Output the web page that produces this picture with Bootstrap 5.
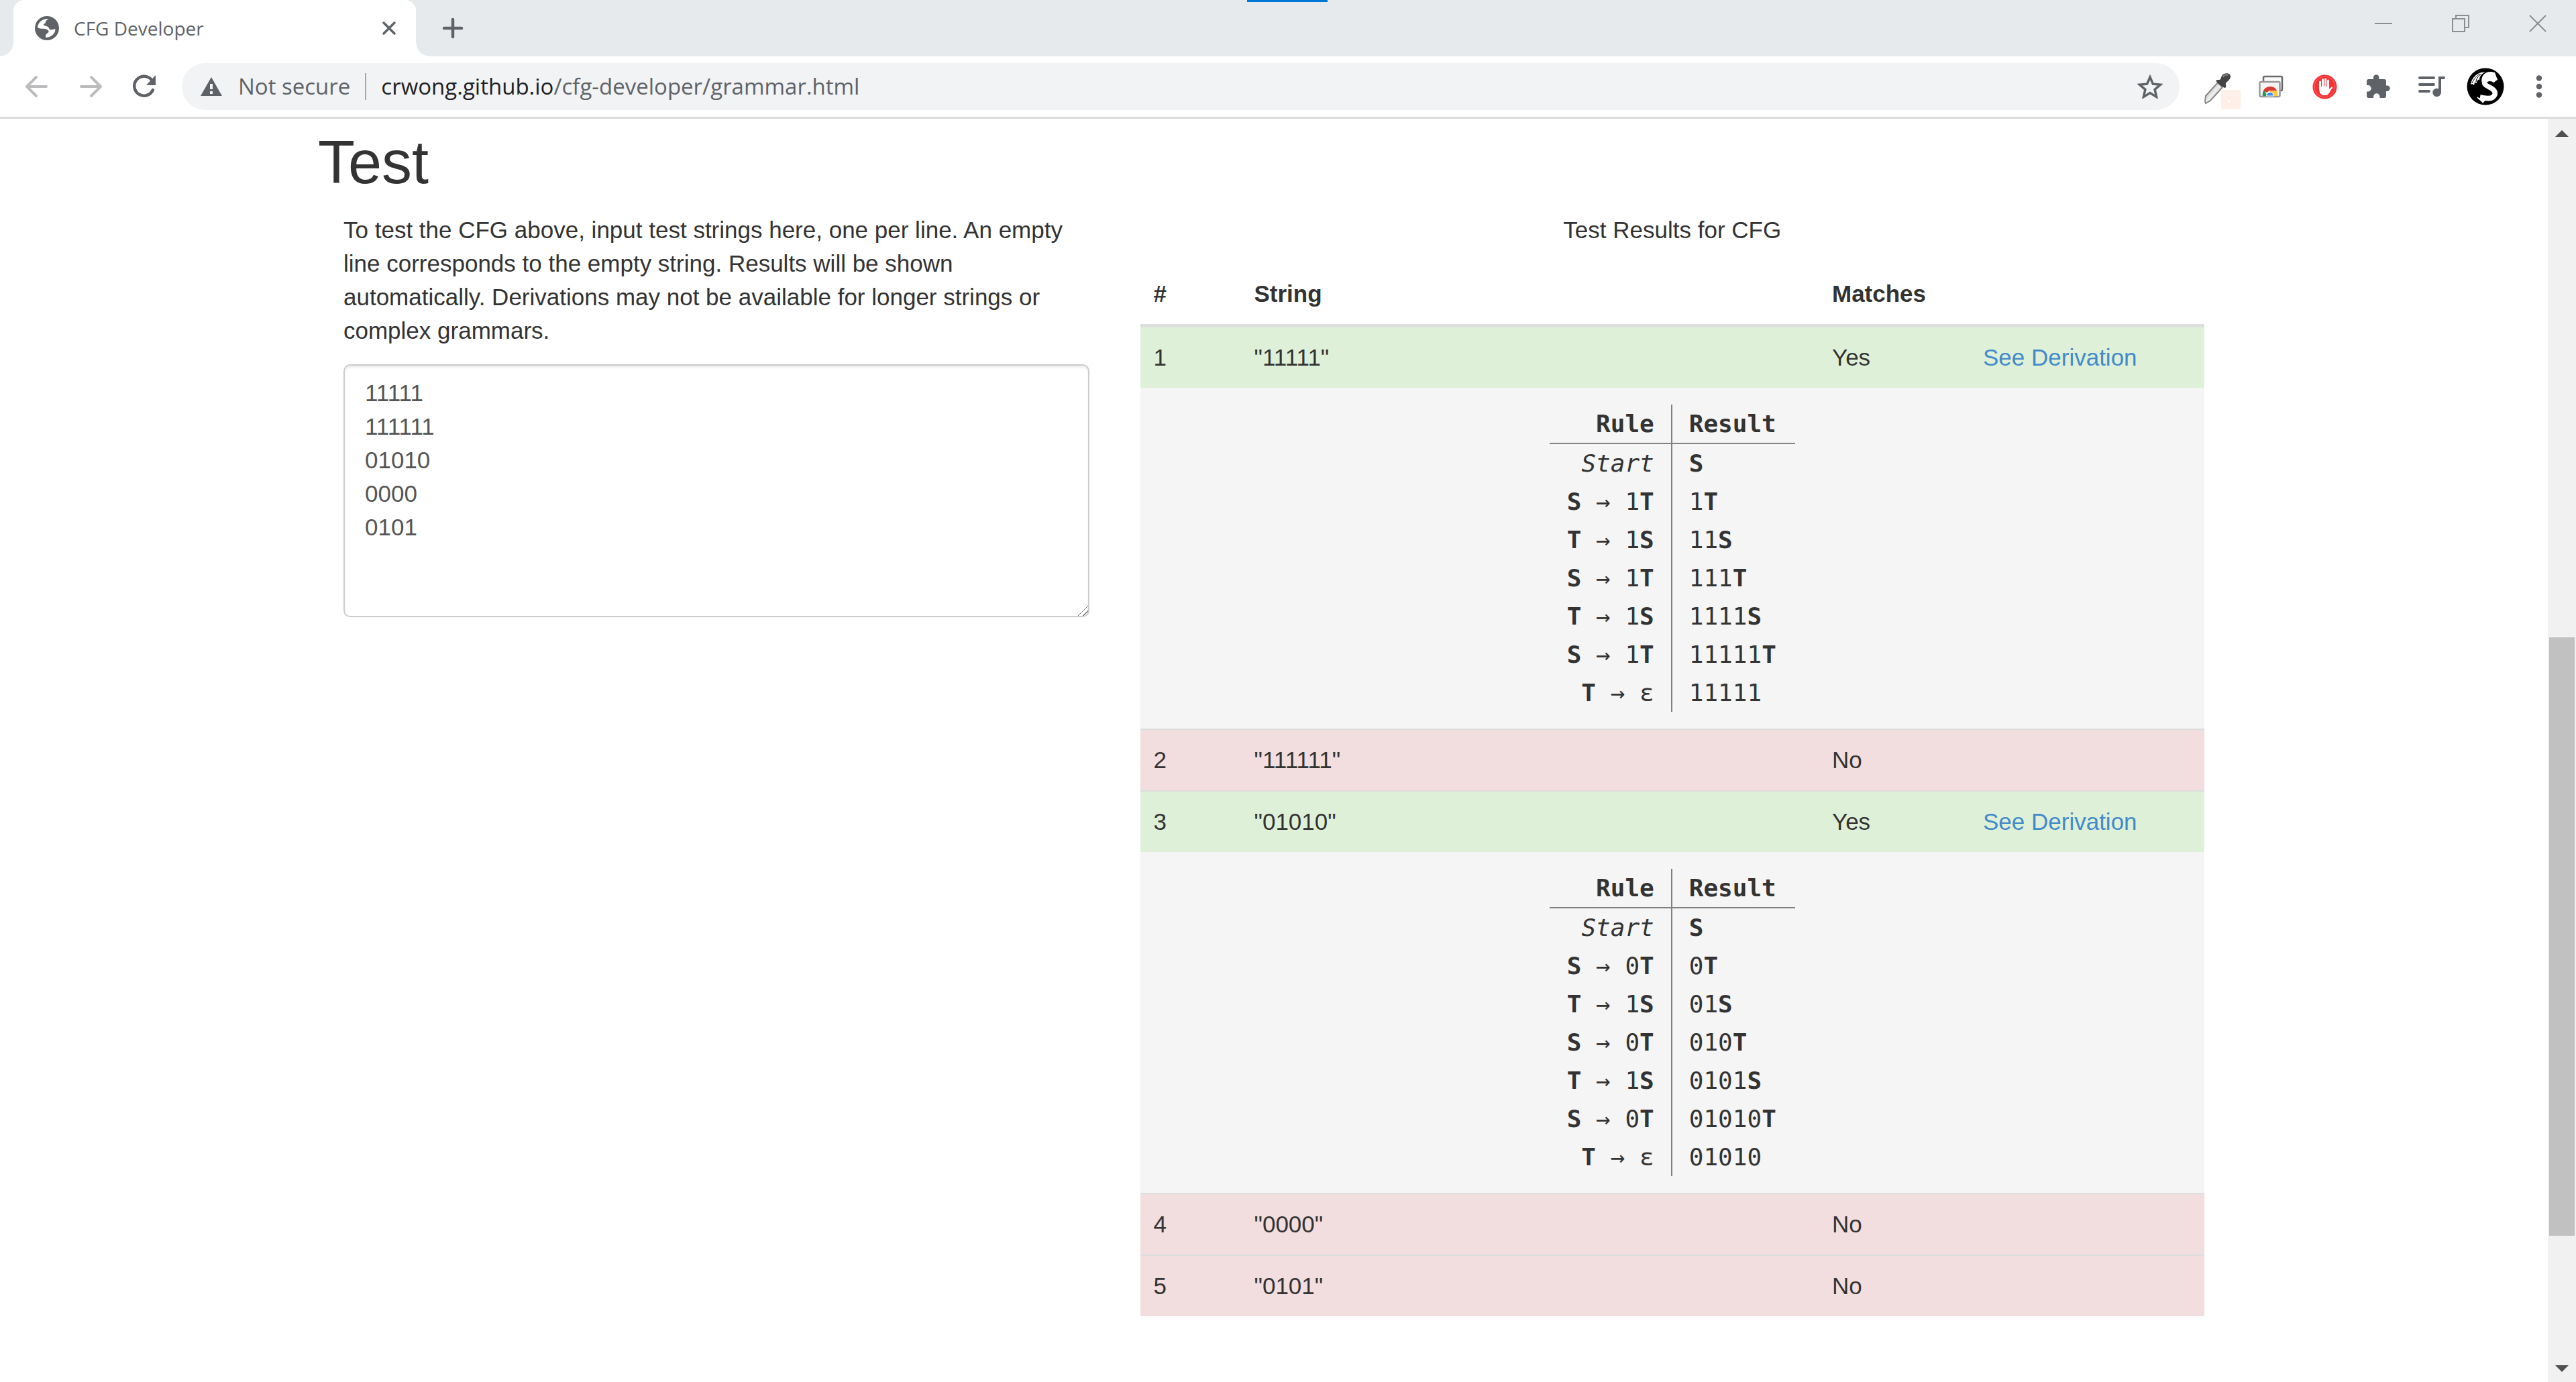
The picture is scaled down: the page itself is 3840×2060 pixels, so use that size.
<!DOCTYPE html>
<html lang="en">
<head>
<meta charset="utf-8">
<meta name="viewport" content="width=device-width, initial-scale=1">
<title>CFG Developer</title>
<link href="https://cdn.jsdelivr.net/npm/bootstrap@5.3.0/dist/css/bootstrap.min.css" rel="stylesheet">
<style>
  body { font-family: "Liberation Sans", Arial, sans-serif; font-size: 35px; line-height: 50px; color: #333; background: #fff; }
  button { background: none; border: 0; padding: 0; color: #5f6368; }
  svg { display: block; flex: none; }

  /* Browser frame */
  .chrome-ui { font-family: "Open Sans", "Noto Sans", sans-serif; color: #5f6368; }
  .tab-strip { height: 84px; background: #e6eaed; padding-left: 20px; }
  .top-mark { top: 0; left: 50%; width: 120px; height: 3px; margin-left: -61px; background: #0078d7; }
  .tab-item { width: 600px; background: #fff; border-radius: 16px 16px 0 0; padding: 0 20px 0 32px; gap: 22px; font-size: 28px; }
  .tab-item::before, .tab-item::after { content: ""; position: absolute; bottom: 0; width: 20px; height: 20px; }
  .tab-item::before { right: 100%; background: radial-gradient(circle at 0 0, transparent 19px, #fff 20px); }
  .tab-item::after { left: 100%; background: radial-gradient(circle at 100% 0, transparent 19px, #fff 20px); }
  .new-tab { width: 110px; }
  .window-btn { width: 115px; height: 70px; color: #8c8f92; }
  .tool-row { height: 93px; border-bottom: 3px solid #dadcdf; padding: 0 15px; }
  .tool-btn { width: 80px; height: 70px; }
  .nav-dim { color: #bbbcbe; }
  .address-bar { height: 70px; margin: 0 16px; padding: 0 4px 0 28px; border-radius: 35px; background: #f1f3f5; font-size: 33px; }
  .address-rule { width: 2px; height: 40px; margin: 0 22px; background: #a5a8ab; }
  .host-name { color: #202124; }

  /* Scroll bar */
  .scroll-track { width: 42px; background: #f1f1f1; color: #505050; padding: 17px 2px 15px; }
  .scroll-thumb { height: 892px; background: #c1c1c1; margin-bottom: 193px; }

  /* Page */
  .page-body { max-width: 2926px; padding: 16px 38px 0; }
  .page-title { font-size: 90px; line-height: 99px; margin-bottom: 26px; font-weight: 400; }
  .test-row { --bs-gutter-x: 76px; margin: 0; }
  .intro-label { margin-bottom: 25px; }
  .test-input { height: 377px; padding: 16px 30px; border: 2px solid #ccc; border-radius: 10px; color: #555; font-size: 35px; line-height: 50px; box-shadow: inset 0 3px 3px rgba(0,0,0,.075); overflow: auto; resize: both; }
  .test-input::-webkit-scrollbar { width: 25px; height: 25px; }
  .test-input::-webkit-resizer { background: linear-gradient(135deg, transparent 0 49%, #777 49% 53%, transparent 53% 73%, #777 73% 77%, transparent 77%); }

  .result-table { table-layout: fixed; border-collapse: separate; border-spacing: 0; color: #333; margin: 0; }
  .result-table > caption { padding: 0 0 25px; color: #333; text-align: center; }
  .result-table > thead > tr > th { padding: 20px; border-bottom: 5px solid #ddd; }
  .result-table > tbody > tr > td { padding: 20px; border: 0; border-top: 2px solid #ddd; background: transparent; }
  .result-table > tbody > tr:first-child > td, .result-table > tbody > tr.steps-row > td { border-top: 0; }
  .result-table > tbody > tr.row-yes > td { background: #dff0d8; }
  .result-table > tbody > tr.row-no > td { background: #f2dede; }
  .result-table > tbody > tr.steps-row > td { background: #f5f5f5; padding: 25px 0; }
  .col-index { width: 150px; }
  .col-match { width: 225px; }
  .col-link { width: 350px; }
  .see-link { color: #428bca; text-decoration: none; }

  .steps-table { font-family: "DejaVu Sans Mono", monospace; font-size: 36px; line-height: 57px; border-collapse: separate; border-spacing: 0; margin: 0 auto; }
  .steps-table th, .steps-table td { width: 183px; padding: 0 25px; white-space: pre; }
  .steps-table tr > :first-child { text-align: right; border-right: 2px solid #808080; padding-left: 20px; }
  .steps-table thead th { border-bottom: 2px solid #808080; }
</style>
<script src="https://cdn.jsdelivr.net/npm/bootstrap@5.3.0/dist/js/bootstrap.bundle.min.js"></script>
</head>
<body class="vh-100 overflow-hidden d-flex flex-column">

<header class="chrome-ui flex-shrink-0">
  <div class="tab-strip d-flex position-relative">
    <span class="top-mark position-absolute"></span>
    <div class="tab-item position-relative d-flex align-items-center">
      <svg width="36" height="36" viewBox="0 0 36 36"><circle cx="18" cy="18" r="18" fill="#5f6368"/><path d="M4 17C5 9 11 4 20 4c-1 2-4 2-4 5 0 2-3 2-3 4s7 1 8 5 5 2 9 1c2 4-4 13-14 13 0-3 0-5 2-6 4-2 3-5 0-6-3-2-9 0-14-3z" fill="#fff"/></svg>
      <span class="me-auto">CFG Developer</span>
      <button type="button" class="p-2" aria-label="Close tab"><svg width="24" height="24" viewBox="0 0 24 24" stroke="currentColor" stroke-width="3.500" stroke-linecap="round"><path d="M4 4l16 16M20 4L4 20"/></svg></button>
    </div>
    <button type="button" class="new-tab d-flex align-items-center justify-content-center" aria-label="New tab"><svg width="32" height="32" viewBox="0 0 32 32" stroke="currentColor" stroke-width="4.500" stroke-linecap="round"><path d="M16 3v26M3 16h26"/></svg></button>
    <div class="d-flex ms-auto">
      <button type="button" class="window-btn d-flex align-items-center justify-content-center" aria-label="Minimize"><svg width="26" height="26" viewBox="0 0 26 26" stroke="currentColor" stroke-width="2"><path d="M0 13h26"/></svg></button>
      <button type="button" class="window-btn d-flex align-items-center justify-content-center" aria-label="Restore"><svg width="26" height="26" viewBox="0 0 26 26" stroke="currentColor" stroke-width="2" fill="none"><path d="M1 6h18v19H1zM6 6V1h19v18h-6"/></svg></button>
      <button type="button" class="window-btn d-flex align-items-center justify-content-center" aria-label="Close"><svg width="26" height="26" viewBox="0 0 26 26" stroke="currentColor" stroke-width="2"><path d="M1 1l24 24M25 1L1 25"/></svg></button>
    </div>
  </div>

  <div class="tool-row d-flex align-items-center">
    <button type="button" class="tool-btn nav-dim d-flex align-items-center justify-content-center" aria-label="Back"><svg width="36" height="36" viewBox="0 0 36 36" fill="none" stroke="currentColor" stroke-width="4" stroke-linecap="round" stroke-linejoin="round"><path d="M32 18H4M17 4L3 18l14 14"/></svg></button>
    <button type="button" class="tool-btn nav-dim d-flex align-items-center justify-content-center" aria-label="Forward"><svg width="36" height="36" viewBox="0 0 36 36" fill="none" stroke="currentColor" stroke-width="4" stroke-linecap="round" stroke-linejoin="round"><path d="M4 18h28M19 4l14 14-14 14"/></svg></button>
    <button type="button" class="tool-btn d-flex align-items-center justify-content-center" aria-label="Reload"><svg width="36" height="36" viewBox="0 0 36 36"><path d="M29 8A14.500 14.500 0 1 0 31 23" fill="none" stroke="currentColor" stroke-width="4.500" stroke-linecap="round"/><path d="M35 1v15H21z" fill="currentColor"/></svg></button>
    <div class="address-bar d-flex align-items-center flex-fill">
      <svg width="32" height="28" viewBox="0 0 32 28"><path d="M16 0l16 28H0z" fill="#5f6368"/><path d="M14 10h4v8h-4zM14 21h4v4h-4z" fill="#f1f3f5"/></svg>
      <span class="ms-4">Not secure</span>
      <span class="address-rule"></span>
      <div role="textbox" aria-label="Address" class="me-auto"><span class="host-name">crwong.github.io</span>/cfg-developer/grammar.html</div>
      <button type="button" class="tool-btn d-flex align-items-center justify-content-center" aria-label="Bookmark this page"><svg width="38" height="36" viewBox="0 0 38 36"><path d="M19 4l4.400 10.200 11.100 1-8.400 7.300 2.500 10.900L19 27.600l-9.600 5.800 2.500-10.900-8.400-7.300 11.100-1z" fill="none" stroke="currentColor" stroke-width="3.500"/></svg></button>
    </div>
    <button type="button" class="tool-btn d-flex align-items-center justify-content-center" aria-label="Color picker">
      <svg width="72" height="70" viewBox="0 0 72 70"><defs><linearGradient id="glass" x1="0" y1="0" x2="1" y2="1"><stop offset="0" stop-color="#8a8a8a"/><stop offset=".5" stop-color="#eee"/><stop offset="1" stop-color="#8a8a8a"/></linearGradient></defs><path d="M37 29l7 7-18 20-7 4-1-3 1-8z" fill="url(#glass)" stroke="#888" stroke-width="2"/><path d="M34 26c3-2 5 0 7-2l2-5c3-5 13-5 13 1 0 5-6 8-7 10s2 5-1 7c-4-1-12-7-14-11z" fill="#444"/><path d="M45 21c1-4 5-4 7-3" stroke="#888" stroke-width="2" fill="none"/><rect x="42" y="40" width="29" height="29" rx="3" fill="#feefe8"/><circle cx="54" cy="57" r="2" fill="#fff"/></svg>
    </button>
    <button type="button" class="tool-btn d-flex align-items-center justify-content-center" aria-label="Remote desktop">
      <svg width="37" height="34" viewBox="0 0 37 34"><rect x="7" y="2" width="28" height="21" rx="2" fill="#fafafa" stroke="#6a6a6a" stroke-width="2.500"/><rect x="1.500" y="10" width="30" height="22" rx="2" fill="#f4f4f4" stroke="#999" stroke-width="2.500"/><path d="M6 31a11 11 0 0 1 2-9l5 9z" fill="#229a51"/><path d="M7 23c4-8 17-8 20 0H16l-4 3z" fill="#d93a35"/><path d="M17 23h10a11 11 0 0 1 1 8H17z" fill="#f9ca3e"/><path d="M11.500 31a5.500 5.500 0 0 1 11 0z" fill="#4286ee" stroke="#fff"/></svg>
    </button>
    <button type="button" class="tool-btn d-flex align-items-center justify-content-center" aria-label="Ad blocker">
      <svg width="37" height="37" viewBox="0 0 37 37"><circle cx="18.500" cy="18.500" r="18" fill="#f83133"/><circle cx="18.500" cy="18.500" r="15.500" fill="none" stroke="#ff6a66"/><g stroke="#fff" stroke-width="3" stroke-linecap="round"><path d="M11.500 21V11M15.500 20V7.500M19.600 20V7M23.500 20V9"/></g><path d="M10 18h15v4l3-3c2-1 3 0 2 1-3 3-5 11-10 11h-4c-5-1-6-6-6-13z" fill="#fff"/></svg>
    </button>
    <button type="button" class="tool-btn d-flex align-items-center justify-content-center" aria-label="Extensions">
      <svg width="36" height="36" viewBox="0 0 36 36"><path fill="currentColor" d="M11 7V4.500a4.200 4.200 0 0 1 8.400 0V7H27q3 0 3 3v6.500h1.500a4.200 4.200 0 0 1 0 8.400H30V32q0 3-3 3h-6.500v-2a4.700 4.700 0 0 0-9.400 0v2H4q-3 0-3-3v-6.500h2a4.700 4.700 0 0 0 0-9.400H1V10q0-3 3-3z"/></svg>
    </button>
    <button type="button" class="tool-btn d-flex align-items-center justify-content-center" aria-label="Media controls">
      <svg width="40" height="32" viewBox="0 0 40 32"><g stroke="currentColor" stroke-width="4" stroke-linecap="round" fill="none"><path d="M2 3h21M2 13h21M2 23h14"/><path d="M38 3h-6v22"/></g><circle cx="27.500" cy="25" r="6.200" fill="currentColor"/></svg>
    </button>
    <button type="button" class="tool-btn d-flex align-items-center justify-content-center" aria-label="Profile">
      <svg width="56" height="56" viewBox="0 0 56 56"><circle cx="28" cy="28" r="27.500" fill="#000"/><path d="M43 20c-4-5-13-5-16 0-2 5 3 7 9 10 7 4 8 9 4 13-5 5-13 2-20 1" fill="none" stroke="#fff" stroke-width="7.500"/><path d="M23 23c-3-10 4-18 14-17l5 1 4 11-7 1-5-5c-5-1-8 3-7 9zM6 25C8 14 15 7 28 6c-6 3-9 7-9 12-2-1-4 2-4 5l-3-1-1 4c-2-2-3-2-5-1zM15 43c3 2 9 4 15 3l-6 7c-2-4-8-6-9-10z" fill="#fff"/><path d="M8 23c3-7 7-11 12-14M14 21c0-4 3-8 7-11" stroke="#000" fill="none"/></svg>
    </button>
    <button type="button" class="tool-btn d-flex align-items-center justify-content-center" aria-label="Menu">
      <svg width="10" height="34" viewBox="0 0 10 34" fill="currentColor"><circle cx="5" cy="4.500" r="4.200"/><circle cx="5" cy="17" r="4.200"/><circle cx="5" cy="29.500" r="4.200"/></svg>
    </button>
  </div>
</header>

<div class="d-flex flex-fill overflow-hidden">
  <main class="flex-fill overflow-hidden">
    <div class="page-body mx-auto">
      <h1 class="page-title">Test</h1>
      <div class="row test-row">
        <section class="col-5">
          <label class="intro-label d-block" for="testStrings">To test the CFG above, input test strings here, one per line. An empty line corresponds to the empty string. Results will be shown automatically. Derivations may not be available for longer strings or complex grammars.</label>
          <textarea id="testStrings" class="form-control test-input" spellcheck="false">11111
111111
01010
0000
0101</textarea>
        </section>
        <section class="col-7">
          <table class="table result-table caption-top">
            <caption>Test Results for CFG</caption>
            <colgroup><col class="col-index"><col><col class="col-match"><col class="col-link"></colgroup>
            <thead>
              <tr><th scope="col">#</th><th scope="col">String</th><th scope="col">Matches</th><th></th></tr>
            </thead>
            <tbody>
              <tr class="row-yes"><td>1</td><td>"11111"</td><td>Yes</td><td><a class="see-link" href="#steps1">See Derivation</a></td></tr>
              <tr class="steps-row"><td colspan="4">
                <table class="steps-table" id="steps1">
                  <thead><tr><th>Rule</th><th>Result</th></tr></thead>
                  <tbody>
                    <tr><td><i>Start</i></td><td><b>S</b></td></tr>
                    <tr><td><b>S</b> → 1<b>T</b></td><td>1<b>T</b></td></tr>
                    <tr><td><b>T</b> → 1<b>S</b></td><td>11<b>S</b></td></tr>
                    <tr><td><b>S</b> → 1<b>T</b></td><td>111<b>T</b></td></tr>
                    <tr><td><b>T</b> → 1<b>S</b></td><td>1111<b>S</b></td></tr>
                    <tr><td><b>S</b> → 1<b>T</b></td><td>11111<b>T</b></td></tr>
                    <tr><td><b>T</b> → ε</td><td>11111</td></tr>
                  </tbody>
                </table>
              </td></tr>
              <tr class="row-no"><td>2</td><td>"111111"</td><td>No</td><td></td></tr>
              <tr class="row-yes"><td>3</td><td>"01010"</td><td>Yes</td><td><a class="see-link" href="#steps3">See Derivation</a></td></tr>
              <tr class="steps-row"><td colspan="4">
                <table class="steps-table" id="steps3">
                  <thead><tr><th>Rule</th><th>Result</th></tr></thead>
                  <tbody>
                    <tr><td><i>Start</i></td><td><b>S</b></td></tr>
                    <tr><td><b>S</b> → 0<b>T</b></td><td>0<b>T</b></td></tr>
                    <tr><td><b>T</b> → 1<b>S</b></td><td>01<b>S</b></td></tr>
                    <tr><td><b>S</b> → 0<b>T</b></td><td>010<b>T</b></td></tr>
                    <tr><td><b>T</b> → 1<b>S</b></td><td>0101<b>S</b></td></tr>
                    <tr><td><b>S</b> → 0<b>T</b></td><td>01010<b>T</b></td></tr>
                    <tr><td><b>T</b> → ε</td><td>01010</td></tr>
                  </tbody>
                </table>
              </td></tr>
              <tr class="row-no"><td>4</td><td>"0000"</td><td>No</td><td></td></tr>
              <tr class="row-no"><td>5</td><td>"0101"</td><td>No</td><td></td></tr>
            </tbody>
          </table>
        </section>
      </div>
    </div>
  </main>
  <div class="scroll-track flex-shrink-0 d-flex flex-column align-items-center" aria-hidden="true">
    <svg width="20" height="10" viewBox="0 0 20 10"><path d="M0 10L10 0l10 10z" fill="currentColor"/></svg>
    <div class="scroll-thumb w-100 mt-auto"></div>
    <svg width="20" height="10" viewBox="0 0 20 10"><path d="M0 0l10 10L20 0z" fill="currentColor"/></svg>
  </div>
</div>
</body>
</html>
